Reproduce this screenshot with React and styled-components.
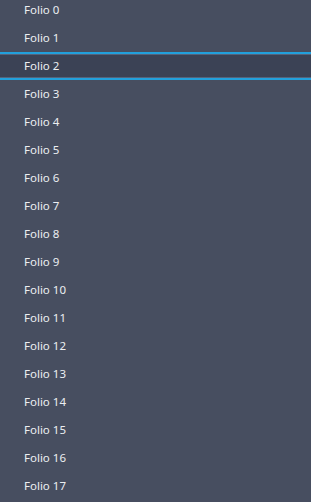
import React from "react";
import styled, { createGlobalStyle } from "styled-components";

const GlobalStyle = createGlobalStyle`
  html, body {
    margin: 0;
    padding: 0;
    background: #474e60;
    overflow: hidden;
  }
`;

const folios = Array.from({ length: 18 }, (_, i) => `Folio ${i}`);

const App = () => {
  return (
    <>
      <GlobalStyle />
      <List>
        {folios.map((name, i) => (
          <Row key={name} selected={i === 2}>
            {name}
          </Row>
        ))}
      </List>
    </>
  );
};

const List = styled.ul`
  list-style: none;
  margin: -4px 0 0 0;
  padding: 0;
  width: 311px;
  height: 506px;
  overflow: hidden;
  background: #474e60;
  font-family: "Noto Sans", "Open Sans", sans-serif;
`;

const Row = styled.li.withConfig({
  shouldForwardProp: (p) => p !== "selected",
})`
  display: flex;
  align-items: center;
  box-sizing: border-box;
  height: 28px;
  padding: 0 0 2px 24px;
  font-size: 11.5px;
  color: #eceef2;
  background: ${(p) => (p.selected ? "#3b4255" : "transparent")};
  border-top: 2px solid ${(p) => (p.selected ? "#22a0dc" : "transparent")};
  border-bottom: 2px solid ${(p) => (p.selected ? "#22a0dc" : "transparent")};
  box-shadow: ${(p) =>
    p.selected ? "inset 0 1px 0 #55647c, inset 0 -1px 0 #55647c" : "none"};
`;

export default App;
